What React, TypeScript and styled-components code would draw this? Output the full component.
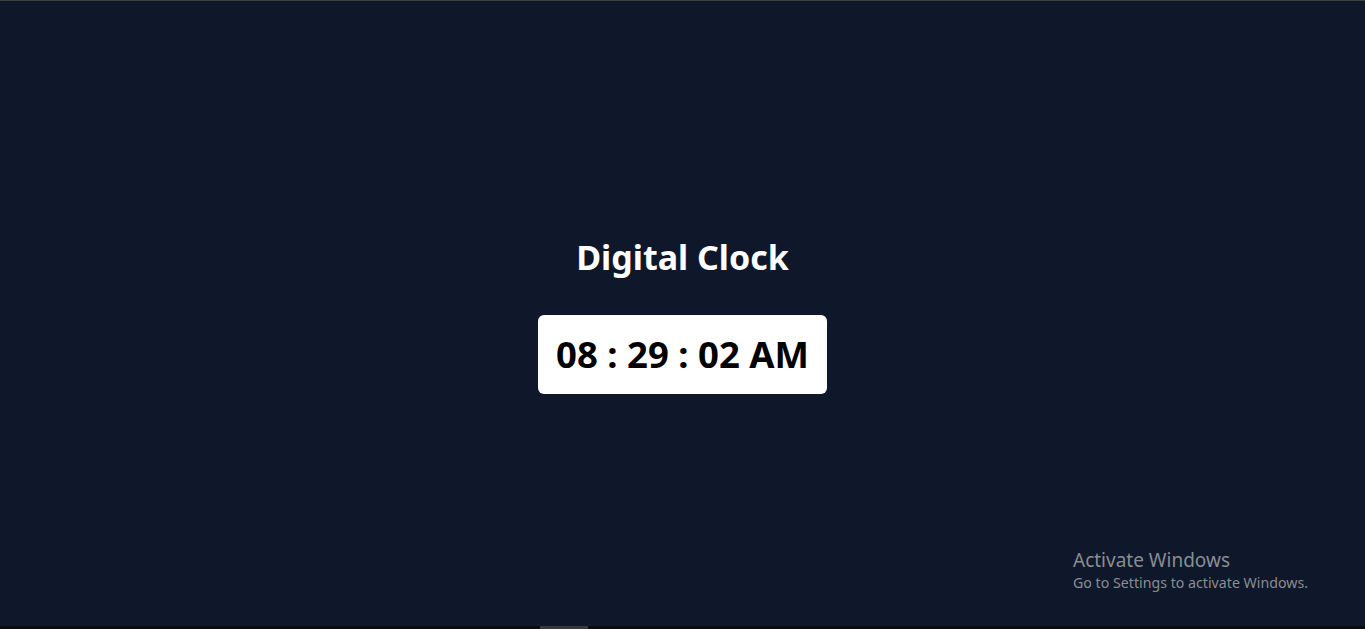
import React, { useState } from "react";
import styled, { createGlobalStyle } from "styled-components";

const Global = createGlobalStyle`
  html, body { margin: 0; padding: 0; height: 100%; }
  body { background: #0f172a; font-family: "Noto Sans", "Open Sans", sans-serif; overflow: hidden; }
  #root { height: 100%; }
`;

const Page = styled.div`
  position: relative;
  height: 629px;
  box-sizing: border-box;
  border-top: 1px solid #3f3f46;
  display: flex;
  flex-direction: column;
  align-items: center;
  justify-content: center;
  gap: 38px;
  background: #0f172a;
`;

const Title = styled.h1`
  margin: 0;
  color: #ffffff;
  font-size: 34px;
  font-weight: 700;
  line-height: 40px;
`;

const ClockBox = styled.div`
  background: #ffffff;
  border-radius: 6px;
  padding: 0 18px;
  height: 79px;
  display: flex;
  align-items: center;
  color: #000000;
  font-size: 36.5px;
  font-weight: 700;
`;

const Taskbar = styled.div`
  position: absolute;
  left: 0;
  right: 0;
  bottom: 0;
  height: 3px;
  background: #0c0c0c;
`;

const TaskbarItem = styled.div`
  position: absolute;
  left: 540px;
  width: 48px;
  height: 3px;
  background: #3a3a3a;
`;

const Watermark = styled.div`
  position: absolute;
  left: 1073px;
  top: 547px;
  color: #8a8d93;
  font-family: "Noto Sans", "Open Sans", sans-serif;
`;

const WmTitle = styled.div`
  font-size: 19px;
  line-height: 25px;
`;

const WmSub = styled.div`
  font-size: 14.2px;
  line-height: 20px;
`;

export default function App() {
  const [time] = useState("08 : 29 : 02 AM");
  return (
    <>
      <Global />
      <Page>
        <Title>Digital Clock</Title>
        <ClockBox>{time}</ClockBox>
        <Watermark>
          <WmTitle>Activate Windows</WmTitle>
          <WmSub>Go to Settings to activate Windows.</WmSub>
        </Watermark>
        <Taskbar>
          <TaskbarItem />
        </Taskbar>
      </Page>
    </>
  );
}
